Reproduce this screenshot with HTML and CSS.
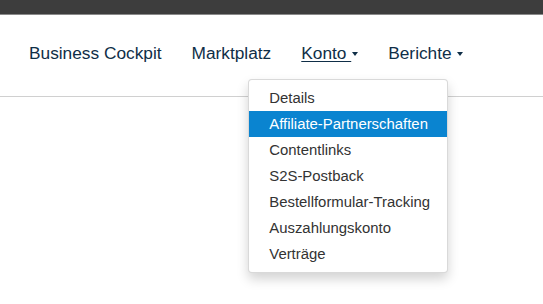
FILE: index.html
```html
<!DOCTYPE html>
<html>
<head>
  <title>Konto</title>
  <link rel="stylesheet" href="styles.css">
</head>
<body>
  <div class="topbar"></div>

  <nav class="navbar">
    <ul class="nav">
      <li class="nav-item"><a href="#" class="nav-link">Business Cockpit</a></li>
      <li class="nav-item"><a href="#" class="nav-link">Marktplatz</a></li>
      <li class="nav-item dropdown open">
        <a href="#" class="nav-link active"><span class="underline">Konto </span><span class="caret"></span></a>
        <div class="dropdown-menu">
          <a href="#" class="menu-item">Details</a>
          <a href="#" class="menu-item selected">Affiliate-Partnerschaften</a>
          <a href="#" class="menu-item">Contentlinks</a>
          <a href="#" class="menu-item">S2S-Postback</a>
          <a href="#" class="menu-item">Bestellformular-Tracking</a>
          <a href="#" class="menu-item">Auszahlungskonto</a>
          <a href="#" class="menu-item">Verträge</a>
        </div>
      </li>
      <li class="nav-item dropdown">
        <a href="#" class="nav-link">Berichte <span class="caret"></span></a>
      </li>
    </ul>
  </nav>
</body>
</html>
```

FILE: styles.css
```css
:root {
  --nav-color: #0f2e47;
  --text-color: #333;
  --highlight: #0a84d0;
  --border-color: #d0d0d0;
}

* {
  margin: 0;
  padding: 0;
  box-sizing: border-box;
}

html, body {
  height: 100%;
}

body {
  font-family: 'Liberation Sans', Arial, sans-serif;
  background-color: #fff;
  color: var(--text-color);
}

.topbar {
  height: 15px;
  background-color: #3d3d3d;
  border-bottom: 1px solid #8a8a8a;
}

.navbar {
  padding: 27px 0 32px 14px;
  border-bottom: 1px solid var(--border-color);
}

.nav {
  list-style: none;
  display: flex;
}

.nav-item {
  position: relative;
}

.nav-link {
  display: block;
  padding: 0 15px;
  font-size: 17.3px;
  line-height: 22px;
  color: var(--nav-color);
  text-decoration: none;
}

.nav-link .underline {
  text-decoration: underline;
  text-underline-offset: 2px;
}

.caret {
  display: inline-block;
  width: 0;
  height: 0;
  margin-left: 1px;
  vertical-align: middle;
  border-top: 4px solid;
  border-left: 3.5px solid transparent;
  border-right: 3.5px solid transparent;
}

.dropdown-menu {
  position: absolute;
  top: 37px;
  left: -38px;
  width: 200px;
  padding: 5px 0;
  background-color: #fff;
  border: 1px solid rgba(0, 0, 0, 0.15);
  border-radius: 4px;
  box-shadow: 0 6px 12px rgba(0, 0, 0, 0.175);
  z-index: 10;
}

.menu-item {
  display: block;
  padding: 0 20px;
  height: 26px;
  line-height: 26px;
  font-size: 14.9px;
  color: var(--text-color);
  text-decoration: none;
  white-space: nowrap;
}

.menu-item.selected {
  background-color: var(--highlight);
  color: #fff;
}
```
